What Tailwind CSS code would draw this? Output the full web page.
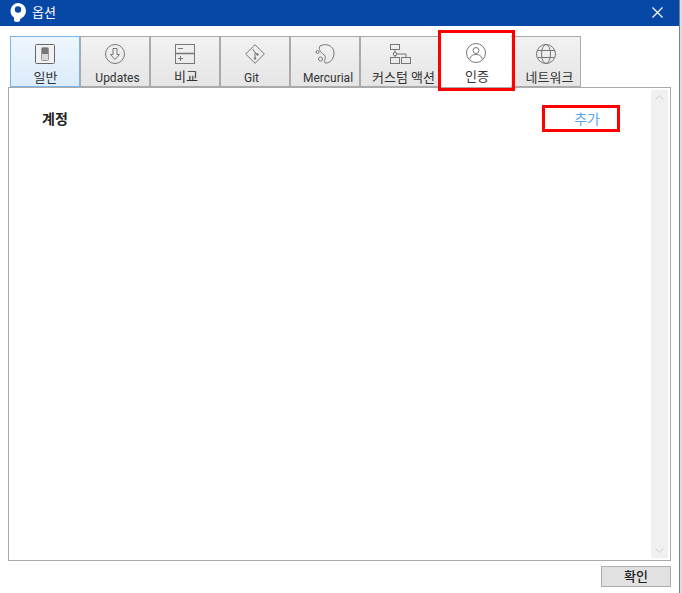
<!DOCTYPE html>
<html lang="ko">
  <head>
    <meta charset="UTF-8" />
    <title>옵션</title>
    <script src="https://cdn.jsdelivr.net/npm/@tailwindcss/browser@4"></script>
  </head>
  <body class="bg-[#dcdcdc]">
    <div class="relative w-[682px] h-[593px] overflow-hidden font-['Roboto','Noto_Sans_CJK_KR',sans-serif] text-[13px] text-[#333]">
      <div class="w-[680px] h-full bg-white border-r border-[#74838f]">
        <!-- title bar -->
        <div class="h-[26px] bg-[#0747a6] flex items-start text-white pl-[10px]">
          <svg class="mt-[3px]" width="16" height="19" viewBox="0 0 16 19"><path fill="#fff" fill-rule="evenodd" d="M8 0a8 8 0 0 1 3 15.400c-1 .5-1 1-1 2.600q-3 2-6 0v-3.500A8 8 0 0 1 8 0zm0 3.300a3.200 3.200 0 1 0 0 6.400 3.200 3.200 0 0 0 0-6.400z"/></svg>
          <span class="ml-[6px] text-[13px] leading-[25px]">옵션</span>
          <svg class="ml-auto mr-[16px] mt-[7px]" width="11" height="11" viewBox="0 0 11 11"><path d="M.5 .5l10 10M10.500 .5l-10 10" stroke="#fff" stroke-width="1.200" fill="none"/></svg>
        </div>
        <!-- tabs -->
        <div class="flex pl-[10px] pt-[10px] h-[61px]">
          <div class="w-[70px] h-[51px] flex flex-col items-center border border-[#7db5ea] bg-gradient-to-b from-[#eef6fd] to-[#dcecfb]">
            <svg class="mt-[7px] shrink-0" width="20" height="20" viewBox="0 0 20 20"><rect x=".5" y=".5" width="19" height="19" rx="1" fill="#f2f2f2" stroke="#666"/><rect x="6.500" y="3.500" width="7" height="13" rx="1" fill="#d8d8d8" stroke="#999"/><rect x="7" y="4" width="6" height="6" fill="#777"/></svg>
            <span class="mt-[7px] ml-[1px] leading-[14px]">일반</span>
          </div>
          <div class="w-[70px] h-[51px] flex flex-col items-center border border-[#aaa] bg-gradient-to-b from-[#f2f2f2] to-[#e5e5e5]">
            <svg class="mt-[7px] shrink-0" width="20" height="20" viewBox="0 0 20 20" fill="none" stroke="#777"><circle cx="10" cy="10" r="9.500"/><path d="M8 4.500h4v6h2.500L10 15.500l-4.500-5H8z"/></svg>
            <span class="mt-[7px] ml-[5px] text-[12px] leading-[14px]">Updates</span>
          </div>
          <div class="w-[70px] h-[51px] flex flex-col items-center border border-[#aaa] bg-gradient-to-b from-[#f2f2f2] to-[#e5e5e5]">
            <svg class="mt-[7px] shrink-0" width="20" height="20" viewBox="0 0 20 20" fill="none" stroke="#777"><rect x=".5" y=".5" width="19" height="19"/><path d="M0 9.500h20" stroke-width="1.500"/><path d="M3 4.500h5M3 14.500h5M5.500 12v5"/></svg>
            <span class="mt-[6px] ml-[2px] leading-[14px]">비교</span>
          </div>
          <div class="w-[70px] h-[51px] flex flex-col items-center border border-[#aaa] bg-gradient-to-b from-[#f2f2f2] to-[#e5e5e5]">
            <svg class="mt-[7px] shrink-0" width="20" height="20" viewBox="0 0 20 20" fill="none" stroke="#777"><path d="M10 .7L19.300 10 10 19.300 .7 10z"/><path d="M7.500 5L10 8.500v6M10 8.500l2.500 2"/><circle cx="10" cy="14.500" r=".8" fill="#777"/><circle cx="12.500" cy="10.500" r=".8" fill="#777"/></svg>
            <span class="mt-[7px] mr-[7px] text-[12px] leading-[14px]">Git</span>
          </div>
          <div class="w-[70px] h-[51px] flex flex-col items-center border border-[#aaa] bg-gradient-to-b from-[#f2f2f2] to-[#e5e5e5]">
            <svg class="mt-[7px] shrink-0" width="20" height="20" viewBox="0 0 20 20" fill="none" stroke="#777"><path d="M5 2c5-3 14-1 14 7 0 6-4 10-8 10-2 0-2-2-1-4s0-4-2-5-5-5-3-8z"/><circle cx="2.500" cy="8" r="1.500"/><circle cx="5.500" cy="15" r="2"/></svg>
            <span class="mt-[7px] ml-[6px] text-[12px] leading-[14px]">Mercurial</span>
          </div>
          <div class="w-[81px] h-[51px] flex flex-col items-center border border-[#aaa] border-r-0 bg-gradient-to-b from-[#f2f2f2] to-[#e5e5e5]">
            <svg class="mt-[7px] mr-[1px] shrink-0" width="21" height="20" viewBox="0 0 21 20" fill="none" stroke="#777"><rect x=".5" y=".5" width="9" height="5"/><rect x=".5" y="13.500" width="9" height="6"/><rect x="11.500" y="13.500" width="9" height="6"/><path d="M5 5.500v8M5 10h11v3.500"/><circle cx="5" cy="10" r="1.800" fill="#e8e8e8"/></svg>
            <span class="mt-[7px] ml-[5px] leading-[14px] whitespace-nowrap">커스텀 액션</span>
          </div>
          <div class="w-[70px] h-[51px] flex flex-col items-center">
            <svg class="mt-[7px] shrink-0" width="20" height="20" viewBox="0 0 20 20" fill="none" stroke="#777"><circle cx="10" cy="10" r="9.500"/><circle cx="10" cy="7.500" r="3"/><path d="M4 16c0-3 3-4.500 6-4.500s6 1.500 6 4.500"/></svg>
            <span class="mt-[7px] ml-[2px] leading-[14px]">인증</span>
          </div>
          <div class="w-[70px] h-[51px] flex flex-col items-center border border-[#aaa] border-l-0 bg-gradient-to-b from-[#f2f2f2] to-[#e5e5e5]">
            <svg class="mt-[7px] shrink-0" width="20" height="20" viewBox="0 0 20 20" fill="none" stroke="#777"><circle cx="10" cy="10" r="9.500"/><ellipse cx="10" cy="10" rx="4.500" ry="9.500"/><path d="M1.500 6.500h17M1.500 13.500h17"/></svg>
            <span class="mt-[7px] ml-[8px] leading-[14px]">네트워크</span>
          </div>
        </div>
        <!-- panel -->
        <div class="ml-[8px] w-[663px] h-[474px] border border-[#aaa] flex p-[2px]">
          <div class="flex-1 flex items-start justify-between pt-[19px] pl-[31px] pr-[51px]">
            <span class="font-bold text-[14px] leading-[20px] text-[#222]">계정</span>
            <span class="text-[14px] leading-[20px] text-[#5aa5f5]">추가</span>
          </div>
          <div class="w-[17px] bg-[#f0f0f0] flex flex-col justify-between items-center py-[5px]">
            <svg width="9" height="5" viewBox="0 0 9 5" fill="none" stroke="#ccc"><path d="M.5 4.500l4-4 4 4"/></svg>
            <svg width="9" height="5" viewBox="0 0 9 5" fill="none" stroke="#ccc"><path d="M.5 .5l4 4 4-4"/></svg>
          </div>
        </div>
        <!-- footer -->
        <div class="flex justify-start pl-[601px] pt-[5px]">
          <div class="w-[70px] h-[21px] bg-[#e1e1e1] border border-[#adadad] flex items-center justify-center text-[13px] font-medium text-[#222]">확인</div>
        </div>
      </div>
      <!-- red annotation boxes -->
      <div class="absolute left-[438px] top-[30px] w-[77px] h-[61px] border-[3px] border-[#ff0000]"></div>
      <div class="absolute left-[542px] top-[105px] w-[78px] h-[27px] border-[3px] border-[#ff0000]"></div>
    </div>
  </body>
</html>
